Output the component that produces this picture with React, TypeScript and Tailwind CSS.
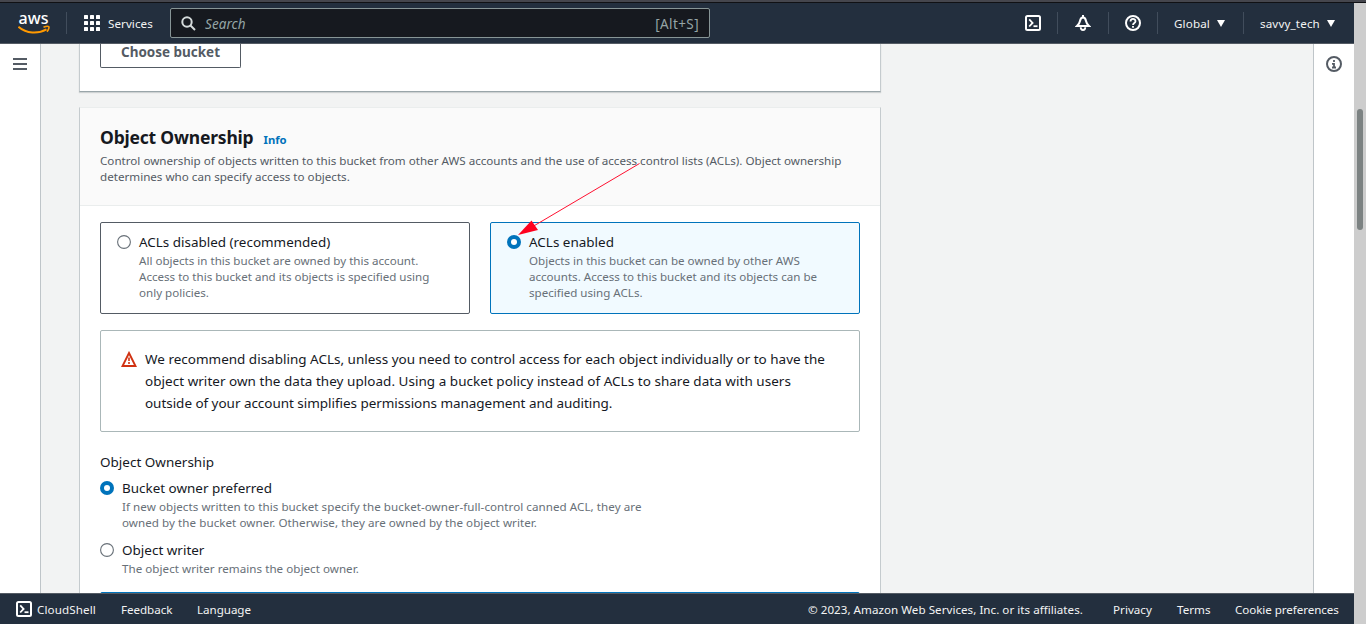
import React from "react";

const ShellIcon = () => (
  <svg width="16" height="16" viewBox="0 0 16 16" fill="none" stroke="#fff" strokeWidth="2" className="shrink-0">
    <rect x="1" y="1" width="14" height="14" rx="1.5" />
    <path d="M4.2 4.3 7.6 7.9 4.2 11.5" strokeWidth="1.8" />
    <path d="M8.500 11.200h4" strokeWidth="1.800" />
  </svg>
);

const Caret = () => (
  <svg width="8" height="7" viewBox="0 0 8 7" className="shrink-0">
    <path d="M0 0h8L4 7z" fill="#fff" />
  </svg>
);

const AwsLogo = () => (
  <div className="relative h-[22px] w-[33px] shrink-0">
    <span className="absolute left-[1px] -top-[5px] text-[16px] leading-[22px] font-medium text-white">aws</span>
    <svg width="33" height="9" viewBox="0 0 33 9" className="absolute left-0 top-[13px]" fill="none">
      <path d="M.4 1.800C8.500 8.800 20 9.200 28.500 4.400" stroke="#f90" strokeWidth="2" />
      <path d="M25.500 2.200C28 1.200 30.400 1.200 30.800 1.700c.5.8-.2 3.300-1.800 5" stroke="#f90" strokeWidth="1.600" />
    </svg>
  </div>
);

const Radio = ({ checked = false }: { checked?: boolean }) => (
  <svg width="14" height="14" viewBox="0 0 14 14" className="shrink-0">
    {checked ? (
      <>
        <circle cx="7" cy="7" r="7" fill="#0073bb" />
        <circle cx="7" cy="7" r="3" fill="#fff" />
      </>
    ) : (
      <circle cx="7" cy="7" r="6.400" fill="#fff" stroke="#687078" strokeWidth="1.100" />
    )}
  </svg>
);

const Divider = ({ className = "" }: { className?: string }) => (
  <div className={"h-[22px] w-px shrink-0 bg-[#414d5c] " + className} />
);

function Header() {
  return (
    <header className="flex h-[41px] shrink-0 items-center border-b border-[#545b64] bg-[#232f3e] text-[11.62px] leading-[18px] tracking-[0.06px] text-[#f2f3f3]">
      <div className="flex w-[66px] justify-center pl-[2px]"><AwsLogo /></div>
      <Divider />
      <svg width="16" height="16" viewBox="0 0 16 16" fill="#fff" className="ml-[17px] shrink-0">
        {[0, 6, 12].map((y) => [0, 6, 12].map((x) => <rect key={x + "-" + y} x={x} y={y} width="4" height="4" rx=".6" />))}
      </svg>
      <span className="ml-2 w-[62px] pt-px">Services</span>
      <div className="flex h-[30px] w-[540px] items-center rounded-[2px] border border-[#879596] bg-[#16191f] px-[10px]">
        <svg width="15" height="15" viewBox="0 0 15 15" fill="none" stroke="#d5dbdb" strokeWidth="2">
          <circle cx="6" cy="6" r="4.700" />
          <path d="M9.500 9.500 14 14" />
        </svg>
        <span className="ml-[9px] pt-px text-[13.5px] text-[#95a5a6] italic">Search</span>
        <span className="ml-auto pt-px text-[13.5px] tracking-[0.4px] text-[#95a5a6]">[Alt+S]</span>
      </div>
      <div className="ml-[315px] flex items-center">
        <ShellIcon />
        <Divider className="ml-4" />
        <svg width="16" height="16" viewBox="0 0 16 16" fill="none" stroke="#fff" className="ml-[17px] shrink-0">
          <path d="M8 2.500C5.900 2.500 5.300 4 5 6 4.700 8 3.800 9.200 2 11h12c-1.800-1.800-2.700-3-3-5-.3-2-.9-3.500-3-3.500z" strokeWidth="2" strokeLinejoin="miter" />
          <path d="M8 0v2.500" strokeWidth="2" />
          <path d="M5.700 12.300c0 3.600 4.600 3.600 4.600 0" strokeWidth="1.800" />
        </svg>
        <Divider className="ml-[17px]" />
        <svg width="16" height="16" viewBox="0 0 16 16" fill="none" stroke="#fff" className="ml-4 shrink-0">
          <circle cx="8" cy="8" r="7" strokeWidth="2" />
          <path d="M5.500 6.500C5.500 3 10.500 3.200 10.500 6.200 10.500 8 8 7.900 8 10M8 11v1.800" strokeWidth="1.800" />
        </svg>
        <Divider className="ml-4" />
        <span className="ml-[16px] w-[43px] pt-px tracking-[0.15px]">Global</span>
        <Caret />
        <Divider className="ml-[18px]" />
        <span className="ml-4 w-[67px] pt-px tracking-[0.15px]">savvy_tech</span>
        <Caret />
      </div>
    </header>
  );
}

const Arrow = () => (
  <svg width="124" height="74" viewBox="0 0 124 74" className="pointer-events-none absolute left-[437px] top-[54px] z-10">
    <path d="M122.500 1.500 15 65" stroke="#ff1030" strokeWidth="1" fill="none" />
    <path d="M1 73 14.500 58.500 21 68z" fill="#ff001e" />
  </svg>
);

export default function App() {
  return (
    <div className="flex h-[624px] w-[1366px] flex-col overflow-hidden bg-[#f2f3f3] font-['Noto_Sans',sans-serif] whitespace-nowrap">
      <div className="h-[3px] shrink-0 border-b border-[#101114] bg-[#45464d]" />
      <div className="flex min-h-0 flex-1">
        <div className="flex w-[1354px] flex-col">
          <Header />
          <div className="flex h-[549px] overflow-hidden">
            <nav className="flex w-[41px] shrink-0 justify-center border-r border-[#bfc5c9] bg-white pt-[14px]">
              <svg width="14" height="12" viewBox="0 0 14 12" fill="#545b64">
                <path d="M0 0h14v2H0zM0 5h14v2H0zM0 10h14v2H0z" />
              </svg>
            </nav>
            <main className="ml-[38px] w-[802px] shrink-0">
              <section className="h-[48px] border-x border-b border-x-[#c5cbce] border-b-[#99a5a9] bg-white px-5 shadow-[0_1px_1px_rgba(0,28,36,0.15)]">
                <div className="flex h-[24px] w-[141px] justify-center rounded-b-[2px] border border-t-0 border-[#545b64] text-[13.48px] leading-[17px] font-bold text-[#545b64]">Choose bucket</div>
              </section>
              <section className="relative mt-[15px] h-[500px] border border-[#c5cbce] border-t-[#eaeded] bg-white">
                <Arrow />
                <div className="h-[98px] border-b border-[#eaeded] bg-[#fafafa] px-5 pt-[18px]">
                  <div className="flex h-[27px] items-baseline">
                    <h2 className="w-[163.5px] text-[17.5px] leading-[22px] font-bold tracking-[-0.2px] text-[#16191f]">Object Ownership</h2>
                    <span className="text-[11.3px] leading-[16px] font-bold text-[#0073bb]">Info</span>
                  </div>
                  <p className="text-[11.63px] leading-[16px] text-[#545b64]">
                    Control ownership of objects written to this bucket from other AWS accounts and the use of access control lists (ACLs). Object ownership<br />
                    determines who can specify access to objects.
                  </p>
                </div>
                <div className="px-5 pt-4">
                  <div className="flex gap-5">
                    <div className="flex h-[92px] w-[370px] rounded-[2px] border border-[#545b64] px-4 pt-[9px]">
                      <div className="pt-[3px]"><Radio /></div>
                      <div className="ml-2">
                        <div className="text-[13.45px] leading-[21px] text-[#16191f]">ACLs disabled (recommended)</div>
                        <p className="text-[11.58px] leading-[16px] text-[#687078]">All objects in this bucket are owned by this account.<br />Access to this bucket and its objects is specified using<br />only policies.</p>
                      </div>
                    </div>
                    <div className="flex h-[92px] w-[370px] rounded-[2px] border border-[#0073bb] bg-[#f1faff] px-4 pt-[9px]">
                      <div className="pt-[3px]"><Radio checked /></div>
                      <div className="ml-2">
                        <div className="text-[13.48px] leading-[21px] text-[#16191f]">ACLs enabled</div>
                        <p className="text-[11.58px] leading-[16px] text-[#687078]">Objects in this bucket can be owned by other AWS<br />accounts. Access to this bucket and its objects can be<br />specified using ACLs.</p>
                      </div>
                    </div>
                  </div>
                  <div className="mt-4 flex h-[102px] rounded-[2px] border border-[#aab7b8] px-5 pt-[17px]">
                    <svg width="16" height="16" viewBox="0 0 16 16" fill="none" stroke="#d13212" className="mt-[3px] shrink-0">
                      <path d="M8 2 14.500 15h-13z" strokeWidth="1.900" />
                      <path d="M8 6.500v3.500M8 11v2" strokeWidth="1.600" />
                    </svg>
                    <p className="ml-2 text-[13.49px] leading-[22px] text-[#16191f]">We recommend disabling ACLs, unless you need to control access for each object individually or to have the<br /><span className="tracking-[0.035px]">object writer own the data they upload. Using a bucket policy instead of ACLs to share data with users</span><br /><span className="tracking-[-0.035px]">outside of your account simplifies permissions management and auditing.</span></p>
                  </div>
                  <h3 className="mt-[19px] text-[13.49px] leading-[22px] text-[#16191f]">Object Ownership</h3>
                  <div className="mt-1 flex gap-2">
                    <div className="pt-[4px]"><Radio checked /></div>
                    <div>
                      <div className="text-[13.45px] leading-[22px] text-[#16191f]">Bucket owner preferred</div>
                      <p className="text-[11.62px] leading-[16px] tracking-[0.05px] text-[#687078]">If new objects written to this bucket specify the bucket-owner-full-control canned ACL, they are<br />owned by the bucket owner. Otherwise, they are owned by the object writer.</p>
                    </div>
                  </div>
                  <div className="mt-2 flex gap-2">
                    <div className="pt-[4px]"><Radio /></div>
                    <div>
                      <div className="text-[13.49px] leading-[22px] text-[#16191f]">Object writer</div>
                      <p className="text-[11.62px] leading-[16px] tracking-[0.03px] text-[#687078]">The object writer remains the object owner.</p>
                    </div>
                  </div>
                  <div className="mt-[15px] h-5 rounded-[2px] border border-[#0073bb] bg-[#f1faff]" />
                </div>
              </section>
            </main>
            <aside className="ml-auto flex w-[41px] shrink-0 justify-center border-l border-[#bfc5c9] bg-white pt-3">
              <svg width="16" height="16" viewBox="0 0 16 16" fill="none" stroke="#545b64">
                <circle cx="8" cy="8" r="7" strokeWidth="2" />
                <path d="M8 4v2M6 7.800h2v3.500M6 11.500h4" strokeWidth="1.800" />
              </svg>
            </aside>
          </div>
          <footer className="flex h-[31px] items-center border-t border-[#545b64] bg-[#232f3e] pl-4 text-[11.62px] leading-[16px] tracking-[0.03px] text-[#f2f3f3]">
            <ShellIcon />
            <span className="ml-[5px] w-[84px] pt-px tracking-[0.12px]">CloudShell</span>
            <span className="w-[76px] pt-px tracking-[-0.04px]">Feedback</span>
            <span className="pt-px tracking-[-0.04px]">Language</span>
            <span className="ml-auto w-[305px] pt-px">© 2023, Amazon Web Services, Inc. or its affiliates.</span>
            <span className="w-[64px] pt-px">Privacy</span>
            <span className="w-[58px] pt-px">Terms</span>
            <span className="w-[119px] pt-px tracking-[-0.06px]">Cookie preferences</span>
          </footer>
        </div>
        <div className="flex w-3 justify-center bg-[#cdcdcd] pt-[106px]">
          <div className="h-[121px] w-[6px] rounded-full bg-[#7c8282]" />
        </div>
      </div>
    </div>
  );
}
